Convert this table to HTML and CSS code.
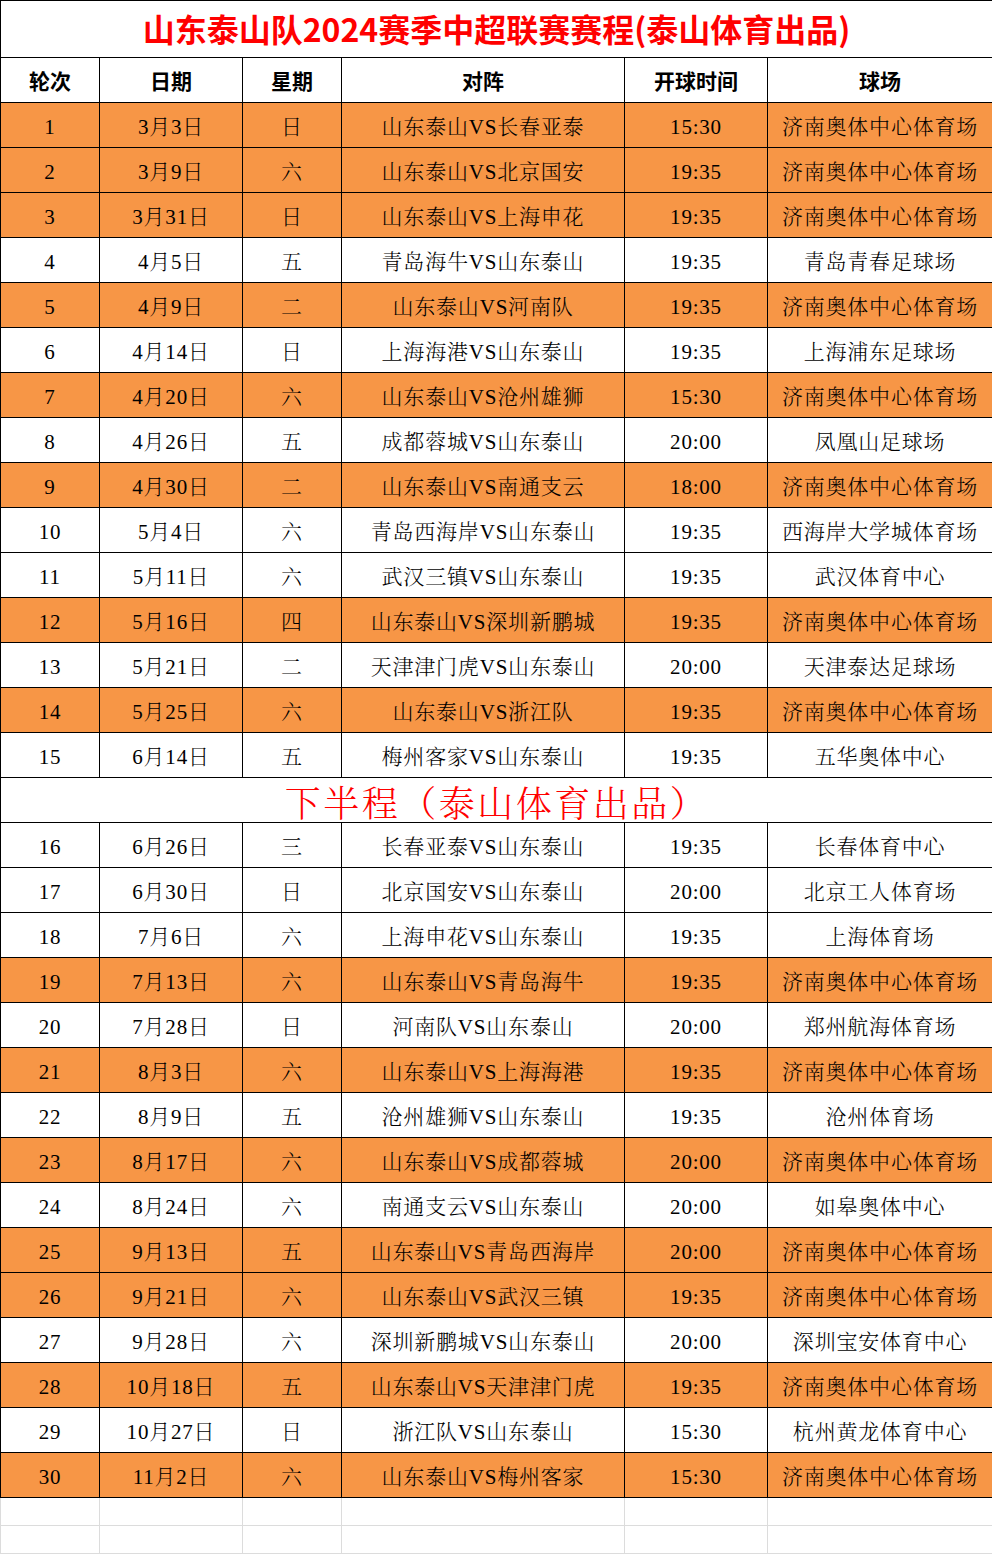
FILE: index.html
```html
<!DOCTYPE html>
<html lang="zh-CN">
<head>
<meta charset="utf-8">
<title>山东泰山队2024赛季中超联赛赛程</title>
<link rel="stylesheet" href="styles.css">
</head>
<body>
<table class="sched">
<colgroup>
<col class="c1"><col class="c2"><col class="c3"><col class="c4"><col class="c5"><col class="c6">
</colgroup>
<tbody>
<tr class="title-row"><td colspan="6">山东泰山队2024赛季中超联赛赛程(泰山体育出品)</td></tr>
<tr class="head-row"><td>轮次</td><td>日期</td><td>星期</td><td>对阵</td><td>开球时间</td><td>球场</td></tr>
<tr class="home"><td>1</td><td>3月3日</td><td>日</td><td>山东泰山VS长春亚泰</td><td>15:30</td><td>济南奥体中心体育场</td></tr>
<tr class="home"><td>2</td><td>3月9日</td><td>六</td><td>山东泰山VS北京国安</td><td>19:35</td><td>济南奥体中心体育场</td></tr>
<tr class="home"><td>3</td><td>3月31日</td><td>日</td><td>山东泰山VS上海申花</td><td>19:35</td><td>济南奥体中心体育场</td></tr>
<tr><td>4</td><td>4月5日</td><td>五</td><td>青岛海牛VS山东泰山</td><td>19:35</td><td>青岛青春足球场</td></tr>
<tr class="home"><td>5</td><td>4月9日</td><td>二</td><td>山东泰山VS河南队</td><td>19:35</td><td>济南奥体中心体育场</td></tr>
<tr><td>6</td><td>4月14日</td><td>日</td><td>上海海港VS山东泰山</td><td>19:35</td><td>上海浦东足球场</td></tr>
<tr class="home"><td>7</td><td>4月20日</td><td>六</td><td>山东泰山VS沧州雄狮</td><td>15:30</td><td>济南奥体中心体育场</td></tr>
<tr><td>8</td><td>4月26日</td><td>五</td><td>成都蓉城VS山东泰山</td><td>20:00</td><td>凤凰山足球场</td></tr>
<tr class="home"><td>9</td><td>4月30日</td><td>二</td><td>山东泰山VS南通支云</td><td>18:00</td><td>济南奥体中心体育场</td></tr>
<tr><td>10</td><td>5月4日</td><td>六</td><td>青岛西海岸VS山东泰山</td><td>19:35</td><td>西海岸大学城体育场</td></tr>
<tr><td>11</td><td>5月11日</td><td>六</td><td>武汉三镇VS山东泰山</td><td>19:35</td><td>武汉体育中心</td></tr>
<tr class="home"><td>12</td><td>5月16日</td><td>四</td><td>山东泰山VS深圳新鹏城</td><td>19:35</td><td>济南奥体中心体育场</td></tr>
<tr><td>13</td><td>5月21日</td><td>二</td><td>天津津门虎VS山东泰山</td><td>20:00</td><td>天津泰达足球场</td></tr>
<tr class="home"><td>14</td><td>5月25日</td><td>六</td><td>山东泰山VS浙江队</td><td>19:35</td><td>济南奥体中心体育场</td></tr>
<tr><td>15</td><td>6月14日</td><td>五</td><td>梅州客家VS山东泰山</td><td>19:35</td><td>五华奥体中心</td></tr>
<tr class="sub-row"><td colspan="6">下半程（泰山体育出品）</td></tr>
<tr><td>16</td><td>6月26日</td><td>三</td><td>长春亚泰VS山东泰山</td><td>19:35</td><td>长春体育中心</td></tr>
<tr><td>17</td><td>6月30日</td><td>日</td><td>北京国安VS山东泰山</td><td>20:00</td><td>北京工人体育场</td></tr>
<tr><td>18</td><td>7月6日</td><td>六</td><td>上海申花VS山东泰山</td><td>19:35</td><td>上海体育场</td></tr>
<tr class="home"><td>19</td><td>7月13日</td><td>六</td><td>山东泰山VS青岛海牛</td><td>19:35</td><td>济南奥体中心体育场</td></tr>
<tr><td>20</td><td>7月28日</td><td>日</td><td>河南队VS山东泰山</td><td>20:00</td><td>郑州航海体育场</td></tr>
<tr class="home"><td>21</td><td>8月3日</td><td>六</td><td>山东泰山VS上海海港</td><td>19:35</td><td>济南奥体中心体育场</td></tr>
<tr><td>22</td><td>8月9日</td><td>五</td><td>沧州雄狮VS山东泰山</td><td>19:35</td><td>沧州体育场</td></tr>
<tr class="home"><td>23</td><td>8月17日</td><td>六</td><td>山东泰山VS成都蓉城</td><td>20:00</td><td>济南奥体中心体育场</td></tr>
<tr><td>24</td><td>8月24日</td><td>六</td><td>南通支云VS山东泰山</td><td>20:00</td><td>如皋奥体中心</td></tr>
<tr class="home"><td>25</td><td>9月13日</td><td>五</td><td>山东泰山VS青岛西海岸</td><td>20:00</td><td>济南奥体中心体育场</td></tr>
<tr class="home"><td>26</td><td>9月21日</td><td>六</td><td>山东泰山VS武汉三镇</td><td>19:35</td><td>济南奥体中心体育场</td></tr>
<tr><td>27</td><td>9月28日</td><td>六</td><td>深圳新鹏城VS山东泰山</td><td>20:00</td><td>深圳宝安体育中心</td></tr>
<tr class="home"><td>28</td><td>10月18日</td><td>五</td><td>山东泰山VS天津津门虎</td><td>19:35</td><td>济南奥体中心体育场</td></tr>
<tr><td>29</td><td>10月27日</td><td>日</td><td>浙江队VS山东泰山</td><td>15:30</td><td>杭州黄龙体育中心</td></tr>
<tr class="home"><td>30</td><td>11月2日</td><td>六</td><td>山东泰山VS梅州客家</td><td>15:30</td><td>济南奥体中心体育场</td></tr>
<tr class="empty"><td></td><td></td><td></td><td></td><td></td><td></td></tr>
<tr class="empty"><td></td><td></td><td></td><td></td><td></td><td></td></tr>
</tbody>
</table>
</body>
</html>
```
FILE: styles.css
```css
html, body {
  margin: 0;
  padding: 0;
  background: #ffffff;
}

.sched {
  width: 992px;
  table-layout: fixed;
  border-collapse: collapse;
  font-family: "Liberation Serif", "Noto Serif CJK SC", "Noto Sans CJK SC", serif;
  font-size: 21px;
  letter-spacing: 0.8px;
  color: #000000;
}

.c1 { width: 99px; }
.c2 { width: 143px; }
.c3 { width: 99px; }
.c4 { width: 283px; }
.c5 { width: 143px; }
.c6 { width: 225px; }

.sched td {
  border: 1px solid #000000;
  height: 45px;
  padding: 0;
  text-align: center;
  vertical-align: middle;
  font-weight: 300;
  line-height: 1;
  padding-top: 5px;
  box-sizing: border-box;
  white-space: nowrap;
}

.home td {
  background: #f79646;
}

.title-row td {
  height: 57px;
  padding-top: 0;
  padding-bottom: 3px;
  font-family: "Noto Sans CJK SC", "Liberation Sans", sans-serif;
  font-weight: 700;
  font-size: 32px;
  letter-spacing: 0;
  color: #ff0000;
}

.head-row td {
  height: 45px;
  padding-top: 0;
  font-family: "Noto Sans CJK SC", "Liberation Sans", sans-serif;
  font-weight: 700;
  font-size: 21px;
  letter-spacing: 0;
}

.sub-row td {
  height: 45px;
  padding-top: 4px;
  font-family: "Noto Serif CJK SC", "Noto Sans CJK SC", serif;
  font-weight: 300;
  font-size: 36px;
  letter-spacing: 2.5px;
  color: #ff0000;
}

.empty td {
  height: 28px;
  border-color: #dcdcdc;
}
```
